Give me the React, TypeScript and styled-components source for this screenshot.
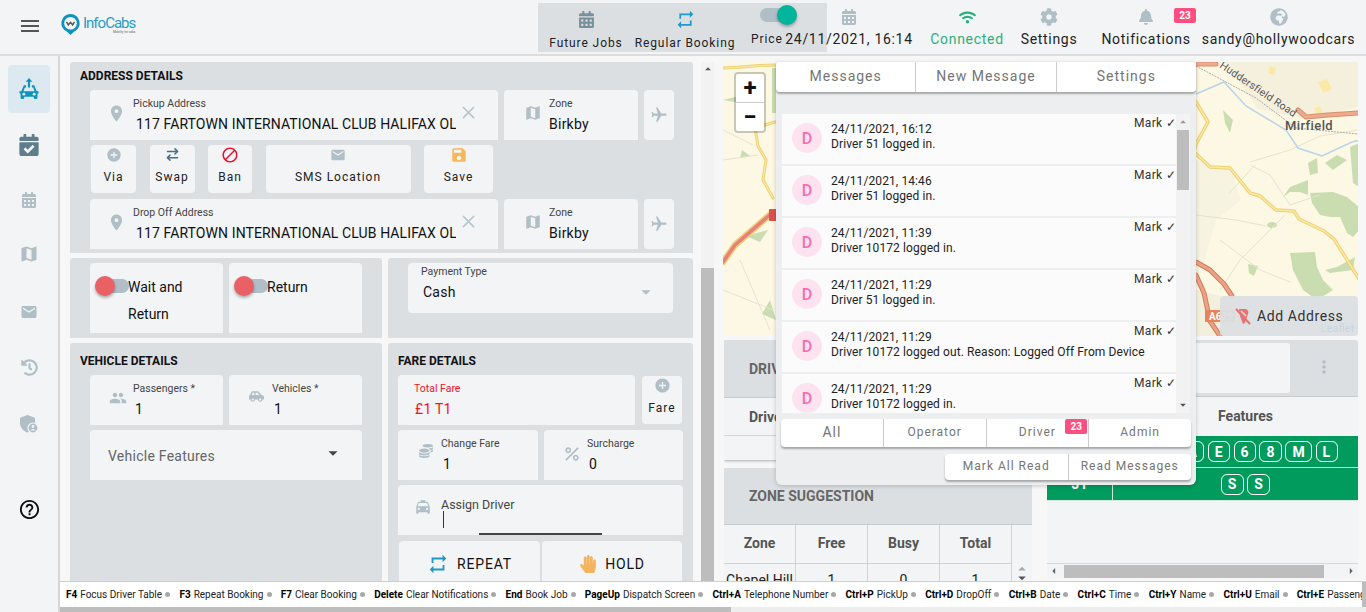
import styled, { createGlobalStyle } from "styled-components";
import { ReactNode } from "react";
import { ArrowRightLeft } from "lucide-react";
import {
  MdAddCircle,
  MdArrowDropDown,
  MdArrowDropUp,
  MdBlock,
  MdClose,
  MdEmail,
  MdFlight,
  MdHelpOutline,
  MdLocalTaxi,
  MdMap,
  MdMenu,
  MdMoreVert,
  MdPeople,
  MdPercent,
  MdPlace,
  MdRepeat,
  MdSave,
  MdArrowLeft,
  MdArrowRight,
} from "react-icons/md";
import {
  FaBell,
  FaCalendarAlt,
  FaCalendarCheck,
  FaCarSide,
  FaCog,
  FaCoins,
  FaGlobeAfrica,
  FaHandPaper,
  FaHistory,
  FaWifi,
} from "react-icons/fa";

const Global = createGlobalStyle`
  html, body { margin: 0; padding: 0; height: 100%; overflow: hidden; }
  body { font-family: Roboto, "Liberation Sans", sans-serif; color: #111; background: #f7f7f7; }
  * { box-sizing: border-box; }
`;

const Page = styled.div`
  width: 1366px;
  height: 612px;
  display: flex;
  flex-direction: column;
  overflow: hidden;
`;

/* ---------- header ---------- */
const Header = styled.header`
  height: 56px;
  flex: none;
  display: flex;
  background: #f2f4f6;
  border-bottom: 2px solid #dcdcdc;
`;
const Burger = styled.div`
  width: 60px;
  display: flex;
  justify-content: center;
  align-items: center;
  color: #555;
  padding-bottom: 2px;
`;
const Logo = styled.div`
  width: 478px;
  display: flex;
  align-items: center;
  gap: 2px;
  padding-bottom: 5px;
`;
const LogoText = styled.div`
  color: #2b9cc4;
  font-size: 15px;
  line-height: 14px;
  letter-spacing: -1px;
  small {
    display: block;
    font-size: 3px;
    line-height: 4px;
    text-align: right;
    color: #666;
    letter-spacing: 0;
  }
`;
const Quick = styled.div`
  width: 289px;
  height: 49px;
  margin-top: 3px;
  background: #dcdfe2;
  display: flex;
  flex: none;
`;
const QuickItem = styled.div<{ $w: number }>`
  width: ${(p) => p.$w}px;
  flex: none;
  display: flex;
  flex-direction: column;
  align-items: center;
  font-size: 12px;
  letter-spacing: 0.9px;
  white-space: nowrap;
  height: 100%;
  padding-top: 3px;
  color: #222;
`;
const IconBox = styled.div<{ $color?: string }>`
  height: 26px;
  display: flex;
  align-items: center;
  color: ${(p) => p.$color || "#b0bec5"};
`;
const QuickLabel = styled.div`
  margin-top: 4px;
  line-height: 14px;
`;
const PriceItem = styled.div`
  flex: 1;
  padding: 0 0 0 15px;
  font-size: 12px;
  line-height: 14px;
  letter-spacing: 0.9px;
  color: #222;
  white-space: nowrap;
`;
const Toggle = styled.div<{ $on?: boolean; $w: number }>`
  position: relative;
  width: ${(p) => p.$w}px;
  height: 14px;
  flex: none;
  background: #b0bec5;
  border-radius: 7px;
  &::after {
    content: "";
    position: absolute;
    top: -3px;
    width: 20px;
    height: 20px;
    border-radius: 50%;
    ${(p) => (p.$on ? "right: 0;" : "left: -9px;")}
    background: ${(p) => (p.$on ? "#00b59c" : "#e96065")};
    box-shadow: 0 2px 3px rgba(0, 0, 0, 0.3);
  }
`;
const PriceToggle = styled(Toggle)`
  margin: 5px 0 10px 9px;
`;
const Statuses = styled.div`
  margin-left: -43px;
  display: flex;
  position: relative;
`;
const Status = styled.div<{ $w: number; $ml?: number; $color?: string }>`
  width: ${(p) => p.$w}px;
  margin-left: ${(p) => p.$ml ?? 0}px;
  position: relative;
  flex: none;
  display: flex;
  flex-direction: column;
  align-items: center;
  padding-top: 4px;
  font-size: 14px;
  letter-spacing: 0.7px;
  white-space: nowrap;
  color: ${(p) => p.$color || "#222"};
`;
const StatusLabel = styled.div`
  line-height: 18px;
`;
const Badge = styled.span`
  position: absolute;
  background: #ff4f81;
  color: #fff;
  font-size: 10px;
  font-weight: 700;
  letter-spacing: 0;
  width: 22px;
  height: 15px;
  line-height: 15px;
  text-align: center;
  border-radius: 2px;
`;
const BellBadge = styled(Badge)`
  top: 8px;
  left: 73px;
`;

/* ---------- body ---------- */
const Body = styled.div`
  flex: 1;
  min-height: 0;
  display: flex;
`;
const Sidebar = styled.nav`
  width: 60px;
  flex: none;
  background: #f2f4f6;
  border-right: 2px solid #d6d6d6;
  padding: 9px 0 0 8px;
  display: flex;
  flex-direction: column;
  align-items: flex-start;
`;
const SideItem = styled.div<{ $active?: boolean; $h: number; $color?: string }>`
  width: 42px;
  height: ${(p) => p.$h}px;
  flex: none;
  display: flex;
  justify-content: center;
  align-items: center;
  border-radius: 4px;
  background: ${(p) => (p.$active ? "#dce9f0" : "transparent")};
  color: ${(p) => p.$color || "#b0bec5"};
`;
const Main = styled.div`
  flex: 1;
  min-width: 0;
  display: flex;
  flex-direction: column;
`;
const Work = styled.div`
  flex: 1;
  min-height: 0;
  display: flex;
  overflow: hidden;
  padding-top: 6px;
`;
const Booking = styled.div`
  width: 623px;
  flex: none;
  margin-left: 10px;
  display: grid;
  grid-template-columns: 312px 305px;
  grid-template-rows: 191px 80px 238px;
  column-gap: 6px;
  row-gap: 5px;
  overflow: hidden;
`;
const Section = styled.section<{ $span?: boolean }>`
  background: #dcdfe2;
  padding: 0 10px;
  overflow: hidden;
  border-radius: 3px 3px 0 0;
  grid-column: ${(p) => (p.$span ? "1 / 3" : "auto")};
`;
const Title = styled.h3<{ $top?: number }>`
  margin: ${(p) => p.$top ?? 0}px 0 0;
  height: 28px;
  line-height: 28px;
  font-size: 12px;
  font-weight: 700;
  color: #111;
`;
const Row = styled.div<{ $left?: number; $gap?: number; $top?: number }>`
  display: flex;
  margin-left: ${(p) => p.$left ?? 10}px;
  margin-top: ${(p) => p.$top ?? 0}px;
  gap: ${(p) => p.$gap ?? 6}px;
`;
const Card = styled.div<{ $w: number }>`
  position: relative;
  width: ${(p) => p.$w}px;
  height: 50px;
  flex: none;
  background: #f2f4f6;
  border-radius: 4px 4px 0 0;
  display: flex;
  overflow: hidden;
`;
const Slot = styled.div<{ $w: number; $dx?: number; $top?: number }>`
  width: ${(p) => p.$w}px;
  flex: none;
  display: flex;
  justify-content: center;
  align-items: flex-start;
  padding: ${(p) => p.$top ?? 14}px 0 0 ${(p) => p.$dx ?? 12}px;
  color: #b0bec5;
`;
const Stack = styled.div<{ $w?: number; $top?: number }>`
  width: ${(p) => (p.$w ? `${p.$w}px` : "auto")};
  flex: ${(p) => (p.$w ? "none" : "1")};
  padding-top: ${(p) => p.$top ?? 7}px;
  overflow: hidden;
`;
const Label = styled.div<{ $color?: string }>`
  font-size: 10.5px;
  line-height: 13px;
  color: ${(p) => p.$color || "#444"};
  white-space: nowrap;
`;
const Value = styled.div<{ $color?: string; $indent?: number; $ls?: number }>`
  margin-top: 5px;
  padding-left: ${(p) => p.$indent ?? 2}px;
  font-size: 14px;
  line-height: 18px;
  letter-spacing: ${(p) => p.$ls ?? 0.25}px;
  white-space: nowrap;
  color: ${(p) => p.$color || "#111"};
`;
const ClearBtn = styled.div`
  width: 24px;
  flex: none;
  display: flex;
  justify-content: center;
  padding-top: 12px;
  color: #b8c7ce;
`;
const PlaneBtn = styled.div`
  width: 30px;
  height: 50px;
  flex: none;
  background: #f2f4f6;
  border-radius: 4px;
  display: flex;
  align-items: center;
  justify-content: center;
  color: #b0bec5;
`;
const ActionBtn = styled.div<{ $w: number; $mt?: number }>`
  width: ${(p) => p.$w}px;
  height: 48px;
  margin-top: ${(p) => p.$mt ?? 0}px;
  flex: none;
  background: #f2f4f6;
  border-radius: 4px;
  display: flex;
  flex-direction: column;
  align-items: center;
  font-size: 12px;
  letter-spacing: 1px;
  color: #222;
`;
const ActionIcon = styled.div<{ $color?: string }>`
  height: 19px;
  display: flex;
  align-items: center;
  color: ${(p) => p.$color || "#b0bec5"};
`;
const ActionText = styled.div`
  margin-top: 6px;
  line-height: 14px;
`;
const ToggleCard = styled.div`
  width: 133px;
  height: 70px;
  flex: none;
  background: #f2f4f6;
  display: flex;
  align-items: flex-start;
  padding: 11px 0 0 14px;
  border-radius: 4px 4px 0 0;
`;
const ToggleText = styled.div`
  font-size: 14px;
  line-height: 27px;
  margin-left: -1px;
  position: relative;
`;
const CardToggle = styled(Toggle)`
  margin-top: 5px;
`;
const PayCard = styled(Card)`
  border-radius: 4px;
  padding-left: 13px;
`;
const Caret = styled.div`
  display: flex;
  padding-top: 18px;
  color: #b0bec5;
`;
const Features = styled(Card)`
  padding: 1px 0 0 18px;
  align-items: center;
  justify-content: space-between;
  font-size: 14px;
  letter-spacing: 0.25px;
  color: #666;
`;
const FeatureCaret = styled.div`
  display: flex;
  color: #444;
  margin: -6px 18px 0 0;
`;
const AssignLabel = styled.div`
  font-size: 12.5px;
  line-height: 16px;
  color: #444;
`;
const Cursor = styled.div`
  width: 1px;
  height: 17px;
  background: #333;
  margin: -2px 0 0 2px;
`;
const Underline = styled.div`
  position: absolute;
  left: 81px;
  bottom: 0;
  width: 123px;
  height: 2px;
  background: #444;
`;
const BigBtn = styled.div<{ $w: number }>`
  width: ${(p) => p.$w}px;
  height: 46px;
  flex: none;
  background: #f2f4f6;
  border-radius: 4px 4px 0 0;
  display: flex;
  align-items: center;
  justify-content: center;
  gap: 8px;
  font-size: 14px;
  letter-spacing: 0.8px;
  color: #111;
`;
const VBar = styled.div`
  width: 13px;
  flex: none;
  margin-left: 8px;
  background: #f2f2f2;
  display: flex;
  flex-direction: column;
  align-items: center;
  color: #555;
  height: 100%;
`;
const VThumb = styled.div`
  width: 100%;
  flex: 1;
  margin-top: 194px;
  background: #bdbdbd;
`;
const UpHead = styled.div`
  height: 12px;
  display: flex;
  justify-content: center;
`;

/* ---------- right side ---------- */
const Right = styled.div`
  position: relative;
  width: 635px;
  flex: none;
  margin-left: 9px;
  display: flex;
  flex-direction: column;
`;
const MapBox = styled.div`
  position: relative;
  height: 274px;
  flex: none;
  background: #fdf8e4;
  overflow: hidden;
`;
const MapSvg = styled.svg`
  display: block;
`;
const Zoom = styled.div`
  position: absolute;
  left: 11px;
  top: 10px;
  width: 32px;
  height: 61px;
  border: 2px solid rgba(0, 0, 0, 0.2);
  border-radius: 4px;
  background: #fff;
  display: flex;
  flex-direction: column;
  background-clip: padding-box;
`;
const ZoomBtn = styled.div`
  flex: 1;
  display: flex;
  align-items: center;
  justify-content: center;
  font-size: 24px;
  font-weight: 700;
  color: #111;
  & + & {
    border-top: 1px solid #ccc;
  }
`;
const AddAddress = styled.div`
  position: absolute;
  right: 0;
  bottom: 0;
  width: 138px;
  height: 40px;
  background: rgba(220, 223, 226, 0.94);
  border-radius: 4px;
  display: flex;
  align-items: center;
  padding-left: 15px;
  gap: 5px;
  font-size: 14px;
  letter-spacing: 0.6px;
  color: #333;
`;
const Leaflet = styled.span`
  position: absolute;
  right: 4px;
  bottom: 1px;
  font-size: 11px;
  color: #c6d6e0;
  letter-spacing: 0;
`;
const Lower = styled.div`
  flex: 1;
  min-height: 0;
  display: grid;
  grid-template-columns: 308px 311px;
  column-gap: 15px;
  padding: 4px 0 0 1px;
`;
const LeftTables = styled.div`
  display: flex;
  flex-direction: column;
  gap: 7px;
  overflow: hidden;
`;
const Panel = styled.div`
  background: #f2f4f6;
  border-radius: 3px 3px 0 0;
  flex: none;
`;
const DriverPanel = styled(Panel)`
  height: 120px;
  box-shadow: 0 1px 3px rgba(0, 0, 0, 0.3);
  margin-bottom: 1px;
`;
const PanelHead = styled.div<{ $h: number }>`
  height: ${(p) => p.$h}px;
  background: #dcdfe2;
  border-bottom: 1px solid #c9cccf;
  display: flex;
  align-items: center;
  padding-left: 25px;
  font-size: 14px;
  font-weight: 700;
  color: #666;
`;
const DriverCol = styled.div`
  height: 38px;
  display: flex;
  align-items: center;
  padding-left: 25px;
  font-size: 14px;
  font-weight: 700;
  color: #555;
  border-bottom: 1px solid #d6d6d6;
`;
const ZoneGrid = styled.div`
  display: grid;
  grid-template-columns: 72px 72px 72px 72px 19px;
  height: 57px;
`;
const ZoneHead = styled.div`
  height: 39px;
  display: flex;
  align-items: center;
  justify-content: center;
  padding-bottom: 2px;
  font-size: 14px;
  font-weight: 700;
  color: #555;
  border-right: 1px solid #d0d3d6;
  border-bottom: 1px solid #d0d3d6;
`;
const ZoneCell = styled.div`
  height: 18px;
  padding-top: 8px;
  text-align: center;
  font-size: 14px;
  line-height: 16px;
  white-space: nowrap;
  color: #222;
  border-right: 1px solid #d0d3d6;
`;
const ZoneScroll = styled.div`
  grid-column: 5;
  grid-row: 1 / 3;
  display: flex;
  flex-direction: column;
  align-items: center;
  justify-content: flex-end;
  color: #999;
  line-height: 0;
`;
const ScrollArrow = styled.div<{ $color?: string; $h?: number }>`
  height: ${(p) => p.$h ?? 9}px;
  display: flex;
  justify-content: center;
  align-items: center;
  color: ${(p) => p.$color || "#555"};
`;
const RightTable = styled(Panel)`
  display: flex;
  flex-direction: column;
  height: 238px;
  overflow: hidden;
`;
const TableTop = styled.div`
  height: 57px;
  flex: none;
  background: #dcdfe2;
  border-bottom: 1px solid #c9cccf;
  padding-top: 3px;
  display: flex;
`;
const TopCard = styled.div`
  width: 243px;
  height: 50px;
  background: #f2f4f6;
  border-radius: 3px;
`;
const Kebab = styled.div`
  flex: 1;
  display: flex;
  align-items: center;
  justify-content: center;
  color: #b0bec5;
  padding-bottom: 6px;
`;
const FeatHead = styled.div`
  height: 39px;
  flex: none;
  display: grid;
  grid-template-columns: 66px 1fr;
  align-items: center;
  text-align: center;
  padding-bottom: 2px;
  font-size: 14px;
  font-weight: 700;
  color: #555;
  span + span {
    padding-left: 20px;
  }
`;
const GreenRow = styled.div<{ $h: number }>`
  height: ${(p) => p.$h}px;
  flex: none;
  display: grid;
  grid-template-columns: 66px 1fr;
  background: #019b5e;
  color: #fff;
  border-bottom: 1px solid #d5e8df;
`;
const GreenId = styled.div`
  display: flex;
  align-items: center;
  justify-content: center;
  font-size: 14px;
  font-weight: 700;
  border-right: 1px solid #cfe8dc;
`;
const Chips = styled.div`
  display: flex;
  align-items: center;
  justify-content: center;
  gap: 3.5px;
  padding-left: 20px;
`;
const Chip = styled.span`
  min-width: 20px;
  height: 21px;
  padding: 0 6px;
  border: 1px solid #fff;
  border-radius: 6px;
  display: flex;
  align-items: center;
  justify-content: center;
  font-size: 14px;
  font-weight: 700;
  letter-spacing: 0.4px;
`;
const TableFill = styled.div`
  flex: 1;
`;
const HBar = styled.div`
  height: 15px;
  flex: none;
  border-top: 1px solid #d8d8d8;
  display: flex;
  align-items: center;
  color: #666;
`;
const HThumb = styled.div`
  width: 260px;
  height: 13px;
  margin: 0 auto 0 3px;
  background: #bdbdbd;
`;

/* ---------- messages popover ---------- */
const Popover = styled.div`
  position: absolute;
  left: 53px;
  top: 0;
  width: 420px;
  height: 423px;
  background: #eceef0;
  border-radius: 0 0 6px 6px;
  box-shadow: 0 1px 4px rgba(0, 0, 0, 0.2);
  display: flex;
  flex-direction: column;
`;
const TabBar = styled.div<{ $h: number }>`
  height: ${(p) => p.$h}px;
  flex: none;
  display: flex;
  background: #fff;
  border-radius: 4px;
  box-shadow: 0 2px 2px rgba(0, 0, 0, 0.3);
`;
const Tab = styled.div<{ $size?: number }>`
  position: relative;
  flex: 1;
  display: flex;
  align-items: center;
  justify-content: center;
  padding-bottom: 2px;
  font-size: ${(p) => p.$size ?? 14}px;
  letter-spacing: 1px;
  color: #757575;
  white-space: nowrap;
  & + & {
    border-left: 1px solid #ccc;
  }
`;
const MsgWrap = styled.div`
  margin: 22px 6px 6px;
  height: 299px;
  flex: none;
  display: flex;
  overflow: hidden;
`;
const MsgList = styled.div`
  width: 394px;
  flex: none;
  display: flex;
  flex-direction: column;
  gap: 2px;
`;
const Msg = styled.div`
  position: relative;
  height: 50px;
  flex: none;
  background: #fbfbfb;
  display: flex;
  padding: 9px 0 0 10px;
`;
const Avatar = styled.div`
  width: 30px;
  height: 30px;
  flex: none;
  border-radius: 50%;
  background: #fde3f0;
  color: #ff69b4;
  display: flex;
  align-items: center;
  justify-content: center;
  font-size: 16px;
  font-weight: 500;
  margin-right: 9px;
`;
const MsgText = styled.div`
  margin-top: -1px;
  font-size: 12px;
  line-height: 15px;
  letter-spacing: 0.1px;
  color: #222;
`;
const Mark = styled.div`
  position: absolute;
  right: 0;
  top: 2px;
  font-size: 12px;
  line-height: 14px;
  letter-spacing: 0.3px;
  color: #333;
`;
const MsgScroll = styled.div`
  width: 14px;
  flex: none;
  background: #f2f2f2;
  display: flex;
  flex-direction: column;
  color: #777;
`;
const MsgThumb = styled.div`
  height: 60px;
  margin: 0 1px;
  background: #bdbdbd;
`;
const MsgGrow = styled.div`
  flex: 1;
`;
const FilterBar = styled(TabBar)`
  margin: 0 5px;
`;
const ReadBar = styled(TabBar)`
  width: 246px;
  margin: 7px 5px 0 auto;
`;
const TabBadge = styled(Badge)`
  top: 0;
  right: 1px;
`;

/* ---------- footer ---------- */
const Shortcuts = styled.div`
  height: 31px;
  flex: none;
  background: #fff;
  border-top: 1px solid #cfcfcf;
  position: relative;
  overflow: hidden;
`;
const ShortcutRow = styled.div`
  height: 25px;
  display: flex;
  align-items: center;
  padding-left: 6px;
  gap: 9.3px;
  white-space: nowrap;
  font-size: 10px;
  color: #222;
`;
const Shortcut = styled.span`
  display: flex;
  align-items: center;
  b {
    font-weight: 700;
    color: #000;
    margin-right: 3px;
  }
`;
const Dot = styled.i`
  width: 5px;
  height: 5px;
  border-radius: 50%;
  background: #a8a8a8;
  margin-left: 3px;
`;
const EdgeThumb = styled.div`
  position: absolute;
  top: 0;
  right: 0;
  width: 4px;
  height: 25px;
  background: #bdbdbd;
`;
const FootScroll = styled.div`
  height: 5px;
  background: #ededed;
`;
const FootThumb = styled.div`
  width: 671px;
  height: 5px;
  background: #bdbdbd;
`;

const shortcuts: [string, string][] = [
  ["F4", "Focus Driver Table"],
  ["F3", "Repeat Booking"],
  ["F7", "Clear Booking"],
  ["Delete", "Clear Notifications"],
  ["End", "Book Job"],
  ["PageUp", "Dispatch Screen"],
  ["Ctrl+A", "Telephone Number"],
  ["Ctrl+P", "PickUp"],
  ["Ctrl+D", "DropOff"],
  ["Ctrl+B", "Date"],
  ["Ctrl+C", "Time"],
  ["Ctrl+Y", "Name"],
  ["Ctrl+U", "Email"],
  ["Ctrl+E", "Passenger"],
];

const messages = [
  ["24/11/2021, 16:12", "Driver 51 logged in."],
  ["24/11/2021, 14:46", "Driver 51 logged in."],
  ["24/11/2021, 11:39", "Driver 10172 logged in."],
  ["24/11/2021, 11:29", "Driver 51 logged in."],
  ["24/11/2021, 11:29", "Driver 10172 logged out. Reason: Logged Off From Device"],
  ["24/11/2021, 11:29", "Driver 10172 logged in."],
];

const ADDRESS = "117 FARTOWN INTERNATIONAL CLUB HALIFAX OL1 3PF";

function LogoMark() {
  return (
    <svg width="21" height="23" viewBox="0 0 24 26">
      <path
        d="M12 1a10.500 10.500 0 0 0-4 20.200L12 25l4-3.800A10.500 10.500 0 0 0 12 1z"
        fill="#0f93bd"
      />
      <circle cx="12" cy="11.500" r="7.200" fill="#f2f4f6" />
      <path d="M7.500 10l2 3.500 2.500-3 2.500 3 2-3.500" fill="none" stroke="#555" strokeWidth="1.600" />
    </svg>
  );
}

function CarUp() {
  return (
    <svg width="22" height="24" viewBox="0 0 30 32" fill="#0f93bd">
      <path d="M15 1l-4.500 5H13.500v8h3V6h3z" />
      <path d="M8 11h3v3H9.200l-1.600 5h14.800l-1.600-5H19v-3h3.200l3.300 8H28v3h-1.500v6a1.500 1.500 0 0 1-1.500 1.500h-2a1.500 1.500 0 0 1-1.500-1.500v-1.500h-13V28A1.500 1.500 0 0 1 7 29.500H5A1.500 1.500 0 0 1 3.500 28v-6H2v-3h2.500z" />
      <circle cx="8" cy="23" r="2" fill="#dce9f0" />
      <circle cx="22" cy="23" r="2" fill="#dce9f0" />
    </svg>
  );
}

function ShieldUser() {
  return (
    <svg width="20" height="20" viewBox="0 0 20 20">
      <path d="M8.500 1L1 3.800v5c0 4.500 3.200 8.500 7.500 9.700 1-.3 2-.8 2.800-1.400V9H16V3.800z" fill="#b0bec5" />
      <circle cx="14" cy="14" r="5" fill="#b0bec5" stroke="#f2f4f6" strokeWidth="1.200" />
      <circle cx="14" cy="12.500" r="1.400" fill="#f2f4f6" />
      <path d="M11.500 16.500a2.600 2.200 0 0 1 5 0z" fill="#f2f4f6" />
    </svg>
  );
}

function PinOff() {
  return (
    <svg width="17" height="17" viewBox="0 0 17 17" fill="#e57373">
      <path d="M4 1h7a4 4 0 0 1 2 5l-3 9-2 1-3-8z" />
      <path d="M1 1l14 15" stroke="#e57373" strokeWidth="2.200" />
      <path d="M6 3l5 5" stroke="#dcdfe2" strokeWidth="1.500" />
    </svg>
  );
}

const YELLOW_EAST = "M1196 102l12 20-12 22-2 8 16 15 20 1 20 25 10 3 16 14 18 1 5 8 25 12 10 8 25 40";
const YELLOW_WEST = "M723 68c20 0 30-3 53-3M755 128l20-6M755 128l3 18 8 14-3 20 10 18";
const MAIN_ROADS = "M1196 64l20 0M1298 110l8 7 22-2 30-2";
const SOUTH_ROADS = "M1196 262l14 8 14 14 8 12M1196 275l8 18 6 28 10 15";
const WEST_TRUNK = "M723 262l12-17 37-32";

function MapArt() {
  return (
    <MapSvg width="635" height="274" viewBox="723 62 635 274">
      <rect x="723" y="62" width="635" height="274" fill="#fdf8e4" />
      {/* built up areas */}
      <path d="M1225 62h133v45l-50 12-50-10-33-47z" fill="#f4f0dc" />
      <path d="M1196 160l35 10 10 30-25 20-20 70h-10v-130z" fill="#f6f3e1" />
      <path d="M1196 290l40 10 10 36h-50z" fill="#f3efdd" />
      <path d="M1270 66l6 2-2 7-6-2zM1318 82l9-3 5 10-9 4zM1314 108l6-2 3 6-6 2z" fill="#fbe9a8" />
      {/* woodland */}
      <g fill="#c9ddb1">
        <path d="M1310 193l23-1 14 5 12 10v23l-6 7-6-4-7-16-10 0-10-2-8-12z" />
        <path d="M1283 197l7-10 18-7v15l-8-3-10 0z" />
        <path d="M1308 163l9-5 1 15-8 2z" />
        <path d="M1325 163l12-8 10 5-14 10z" />
        <path d="M1350 147l9-4v44l-6-4z" />
        <path d="M1290 253l25-1 2 15 6 13 10 10-16 10-14-10-10-20z" />
        <path d="M1325 270l12-3 18-10-2 13-23 3z" />
        <ellipse cx="1272" cy="225" rx="5" ry="3" />
        <path d="M1223 110l10 10-3 13-5-10z" />
        <path d="M1248 264l10 2-4 10-5-3z" />
        <path d="M723 100l25-6 8 5-10 5zM742 150l8 6-10 2zM768 230l-8 12-14-6zM770 300l6 20-14-6z" />
        <path d="M772 68h4v45h-4z" />
      </g>
      {/* minor roads */}
      <g fill="none" stroke="#e6e2cc" strokeWidth="1">
        <path d="M1250 162l40-12 30-14 38-6M1255 165l-20 22-6 6M1285 215l-20 20-25 25-20 30M1220 240l40 30 30 12M1196 215l40 5 30 6M1320 195l-30 10-20-30-20-10" />
        <path d="M723 130l30 15M723 160l35-5M723 290l50 20M740 260l30 70" />
      </g>
      {/* rail and river */}
      <path d="M1196 66l60 32 40 30 62 6" fill="none" stroke="#aaa" strokeWidth="1" strokeDasharray="2 1" />
      <path d="M1196 94l28-12 22 24 40 24 12 18 24 8 30-14 26-6" fill="none" stroke="#b8d4ea" strokeWidth="1.500" />
      {/* roads, casing first */}
      <g fill="none" strokeLinecap="round" strokeLinejoin="round">
        <path d={YELLOW_EAST} stroke="#eccf74" strokeWidth="3.500" />
        <path d={YELLOW_EAST} stroke="#fbe9a0" strokeWidth="1.500" />
        <path d={YELLOW_WEST} stroke="#eccf74" strokeWidth="3" />
        <path d={YELLOW_WEST} stroke="#fbe9a0" strokeWidth="1.200" />
        <path d={WEST_TRUNK} stroke="#eccf74" strokeWidth="6.500" />
        <path d={WEST_TRUNK} stroke="#e77f7a" strokeWidth="3.500" />
        <path d={MAIN_ROADS} stroke="#d98e6c" strokeWidth="5" />
        <path d={MAIN_ROADS} stroke="#eeaa8c" strokeWidth="3" />
        <path d={SOUTH_ROADS} stroke="#cf7f60" strokeWidth="5" />
        <path d={SOUTH_ROADS} stroke="#eea184" strokeWidth="3" />
      </g>
      <rect x="769" y="209" width="8" height="12" rx="1" fill="#d9534f" />
      <text x="1219" y="67" fontFamily="Roboto, sans-serif" fontSize="10.500" fill="#555" transform="rotate(34 1219 67)" letterSpacing="0.2">
        Huddersfield Road
      </text>
      <text x="1285" y="130" fontFamily="Roboto, sans-serif" fontSize="13" fontWeight="500" fill="#555" letterSpacing="0.4">
        Mirfield
      </text>
      <rect x="1205" y="310" width="30" height="12" rx="1" fill="#e8825a" />
      <text x="1209" y="320" fontFamily="Roboto, sans-serif" fontSize="10" fontWeight="700" fill="#fff">
        A629
      </text>
    </MapSvg>
  );
}

function Field(props: {
  w: number;
  slot: number;
  icon?: ReactNode;
  label: string;
  value: string;
  color?: string;
  indent?: number;
}) {
  return (
    <Card $w={props.w}>
      <Slot $w={props.slot}>{props.icon}</Slot>
      <Stack>
        <Label $color={props.color}>{props.label}</Label>
        <Value $color={props.color} $indent={props.indent}>
          {props.value}
        </Value>
      </Stack>
    </Card>
  );
}

function AddressRow({ label, top }: { label: string; top?: number }) {
  return (
    <Row $top={top}>
      <Card $w={408}>
        <Slot $w={43} $dx={9}>
          <MdPlace size={19} />
        </Slot>
        <Stack $w={323}>
          <Label>{label}</Label>
          <Value $indent={3} $ls={0.1}>
            {ADDRESS}
          </Value>
        </Stack>
        <ClearBtn>
          <MdClose size={21} />
        </ClearBtn>
      </Card>
      <Field w={134} slot={45} icon={<MdMap size={18} />} label="Zone" value="Birkby" indent={0} />
      <PlaneBtn>
        <MdFlight size={18} style={{ transform: "rotate(90deg)" }} />
      </PlaneBtn>
    </Row>
  );
}

function App() {
  return (
    <Page>
      <Global />
      <Header>
        <Burger>
          <MdMenu size={24} />
        </Burger>
        <Logo>
          <LogoMark />
          <LogoText>
            InfoCabs
            <small>Mobility for cabs</small>
          </LogoText>
        </Logo>
        <Quick>
          <QuickItem $w={96}>
            <IconBox $color="#78909c">
              <FaCalendarAlt size={17} />
            </IconBox>
            <QuickLabel>Future Jobs</QuickLabel>
          </QuickItem>
          <QuickItem $w={102}>
            <IconBox $color="#1d9ac6">
              <MdRepeat size={21} />
            </IconBox>
            <QuickLabel>Regular Booking</QuickLabel>
          </QuickItem>
          <PriceItem>
            <PriceToggle $on $w={37} />
            Price
          </PriceItem>
        </Quick>
        <Statuses>
          <Status $w={130}>
            <IconBox>
              <FaCalendarAlt size={16} />
            </IconBox>
            <StatusLabel>24/11/2021, 16:14</StatusLabel>
          </Status>
          <Status $w={74} $ml={16} $color="#2fae80">
            <IconBox $color="#2fae80">
              <FaWifi size={17} />
            </IconBox>
            <StatusLabel>Connected</StatusLabel>
          </Status>
          <Status $w={58} $ml={16}>
            <IconBox>
              <FaCog size={18} />
            </IconBox>
            <StatusLabel>Settings</StatusLabel>
          </Status>
          <Status $w={90} $ml={23}>
            <IconBox>
              <FaBell size={16} />
            </IconBox>
            <StatusLabel>Notifications</StatusLabel>
            <BellBadge>23</BellBadge>
          </Status>
          <Status $w={155} $ml={10}>
            <IconBox>
              <FaGlobeAfrica size={18} />
            </IconBox>
            <StatusLabel>sandy@hollywoodcars</StatusLabel>
          </Status>
        </Statuses>
      </Header>
      <Body>
        <Sidebar>
          <SideItem $active $h={48}>
            <CarUp />
          </SideItem>
          <SideItem $h={64} $color="#607d8b">
            <FaCalendarCheck size={22} />
          </SideItem>
          <SideItem $h={46}>
            <FaCalendarAlt size={16} />
          </SideItem>
          <SideItem $h={62}>
            <MdMap size={20} />
          </SideItem>
          <SideItem $h={54}>
            <MdEmail size={18} />
          </SideItem>
          <SideItem $h={56}>
            <FaHistory size={17} />
          </SideItem>
          <SideItem $h={58}>
            <ShieldUser />
          </SideItem>
          <SideItem $h={112} $color="#111">
            <MdHelpOutline size={23} />
          </SideItem>
        </Sidebar>
        <Main>
          <Work>
            <Booking>
              <Section $span>
                <Title>ADDRESS DETAILS</Title>
                <AddressRow label="Pickup Address" />
                <Row $left={11} $gap={13.5} $top={5}>
                  <ActionBtn $w={45}>
                    <ActionIcon>
                      <MdAddCircle size={16} />
                    </ActionIcon>
                    <ActionText>Via</ActionText>
                  </ActionBtn>
                  <ActionBtn $w={45}>
                    <ActionIcon $color="#4a6f8a">
                      <ArrowRightLeft size={15} strokeWidth={2.4} />
                    </ActionIcon>
                    <ActionText>Swap</ActionText>
                  </ActionBtn>
                  <ActionBtn $w={44}>
                    <ActionIcon $color="#e8112d">
                      <MdBlock size={18} />
                    </ActionIcon>
                    <ActionText>Ban</ActionText>
                  </ActionBtn>
                  <ActionBtn $w={145}>
                    <ActionIcon>
                      <MdEmail size={16} />
                    </ActionIcon>
                    <ActionText>SMS Location</ActionText>
                  </ActionBtn>
                  <ActionBtn $w={69}>
                    <ActionIcon $color="#f8b758">
                      <MdSave size={18} />
                    </ActionIcon>
                    <ActionText>Save</ActionText>
                  </ActionBtn>
                </Row>
                <AddressRow label="Drop Off Address" top={6} />
              </Section>

              <Section>
                <Row $top={5}>
                  <ToggleCard>
                    <CardToggle $w={25} />
                    <ToggleText>
                      Wait and
                      <br />
                      Return
                    </ToggleText>
                  </ToggleCard>
                  <ToggleCard>
                    <CardToggle $w={25} />
                    <ToggleText>Return</ToggleText>
                  </ToggleCard>
                </Row>
              </Section>
              <Section>
                <Row $top={5}>
                  <PayCard $w={265}>
                    <Stack $w={214} $top={2}>
                      <Label>Payment Type</Label>
                      <Value>Cash</Value>
                    </Stack>
                    <Caret>
                      <MdArrowDropDown size={22} />
                    </Caret>
                  </PayCard>
                </Row>
              </Section>

              <Section>
                <Title $top={4}>VEHICLE DETAILS</Title>
                <Row>
                  <Field w={133} slot={43} icon={<MdPeople size={18} />} label="Passengers *" value="1" />
                  <Field w={133} slot={43} icon={<FaCarSide size={15} />} label="Vehicles *" value="1" />
                </Row>
                <Row $top={5}>
                  <Features $w={272}>
                    Vehicle Features
                    <FeatureCaret>
                      <MdArrowDropDown size={22} />
                    </FeatureCaret>
                  </Features>
                </Row>
              </Section>
              <Section>
                <Title $top={4}>FARE DETAILS</Title>
                <Row $left={0} $gap={7}>
                  <Field w={237} slot={16} label="Total Fare" value="£1 T1" color="#f0151f" indent={1} />
                  <ActionBtn $w={40} $mt={1}>
                    <ActionIcon>
                      <MdAddCircle size={17} />
                    </ActionIcon>
                    <ActionText>Fare</ActionText>
                  </ActionBtn>
                </Row>
                <Row $left={0} $top={5}>
                  <Field w={140} slot={43} icon={<FaCoins size={14} />} label="Change Fare" value="1" />
                  <Field w={139} slot={43} icon={<MdPercent size={20} />} label="Surcharge" value="0" />
                </Row>
                <Row $left={0} $top={5}>
                  <Card $w={285}>
                    <Slot $w={43} $dx={7} $top={13}>
                      <MdLocalTaxi size={18} />
                    </Slot>
                    <Stack $top={12}>
                      <AssignLabel>Assign Driver</AssignLabel>
                      <Cursor />
                    </Stack>
                    <Underline />
                  </Card>
                </Row>
                <Row $left={1} $gap={2} $top={6}>
                  <BigBtn $w={141}>
                    <MdRepeat size={22} color="#1d9ac6" />
                    REPEAT
                  </BigBtn>
                  <BigBtn $w={140}>
                    <FaHandPaper size={18} color="#f4b35e" />
                    HOLD
                  </BigBtn>
                </Row>
              </Section>
            </Booking>
            <VBar>
              <UpHead>
                <MdArrowDropUp size={14} />
              </UpHead>
              <VThumb />
            </VBar>

            <Right>
              <MapBox>
                <MapArt />
                <Zoom>
                  <ZoomBtn>+</ZoomBtn>
                  <ZoomBtn>−</ZoomBtn>
                </Zoom>
                <AddAddress>
                  <PinOff />
                  Add Address
                  <Leaflet>Leaflet</Leaflet>
                </AddAddress>
              </MapBox>
              <Lower>
                <LeftTables>
                  <DriverPanel>
                    <PanelHead $h={58}>DRIVERS</PanelHead>
                    <DriverCol>Driver</DriverCol>
                  </DriverPanel>
                  <Panel>
                    <PanelHead $h={57}>ZONE SUGGESTION</PanelHead>
                    <ZoneGrid>
                      <ZoneHead>Zone</ZoneHead>
                      <ZoneHead>Free</ZoneHead>
                      <ZoneHead>Busy</ZoneHead>
                      <ZoneHead>Total</ZoneHead>
                      <ZoneScroll>
                        <ScrollArrow $color="#aaa">
                          <MdArrowDropUp size={18} />
                        </ScrollArrow>
                        <ScrollArrow>
                          <MdArrowDropDown size={18} />
                        </ScrollArrow>
                      </ZoneScroll>
                      <ZoneCell>Chapel Hill</ZoneCell>
                      <ZoneCell>1</ZoneCell>
                      <ZoneCell>0</ZoneCell>
                      <ZoneCell>1</ZoneCell>
                    </ZoneGrid>
                  </Panel>
                </LeftTables>
                <RightTable>
                  <TableTop>
                    <TopCard />
                    <Kebab>
                      <MdMoreVert size={20} />
                    </Kebab>
                  </TableTop>
                  <FeatHead>
                    <span>Driver</span>
                    <span>Features</span>
                  </FeatHead>
                  <GreenRow $h={32}>
                    <GreenId>51</GreenId>
                    <Chips>
                      {["D", "A", "E", "6", "8", "M", "L"].map((c, i) => (
                        <Chip key={i}>{c}</Chip>
                      ))}
                    </Chips>
                  </GreenRow>
                  <GreenRow $h={33}>
                    <GreenId>J1</GreenId>
                    <Chips>
                      <Chip>S</Chip>
                      <Chip>S</Chip>
                    </Chips>
                  </GreenRow>
                  <TableFill />
                  <HBar>
                    <MdArrowLeft size={14} />
                    <HThumb />
                    <MdArrowRight size={14} />
                  </HBar>
                </RightTable>
              </Lower>
              <Popover>
                <TabBar $h={30}>
                  <Tab>Messages</Tab>
                  <Tab>New Message</Tab>
                  <Tab>Settings</Tab>
                </TabBar>
                <MsgWrap>
                  <MsgList>
                    {messages.map((m, i) => (
                      <Msg key={i}>
                        <Avatar>D</Avatar>
                        <MsgText>
                          {m[0]}
                          <br />
                          {m[1]}
                        </MsgText>
                        <Mark>Mark ✓</Mark>
                      </Msg>
                    ))}
                  </MsgList>
                  <MsgScroll>
                    <ScrollArrow $color="#999" $h={16}>
                      <MdArrowDropUp size={14} />
                    </ScrollArrow>
                    <MsgThumb />
                    <MsgGrow />
                    <ScrollArrow $h={16}>
                      <MdArrowDropDown size={14} />
                    </ScrollArrow>
                  </MsgScroll>
                </MsgWrap>
                <FilterBar $h={28}>
                  <Tab>All</Tab>
                  <Tab $size={12}>Operator</Tab>
                  <Tab $size={12}>
                    Driver
                    <TabBadge>23</TabBadge>
                  </Tab>
                  <Tab $size={12}>Admin</Tab>
                </FilterBar>
                <ReadBar $h={26}>
                  <Tab $size={12}>Mark All Read</Tab>
                  <Tab $size={12}>Read Messages</Tab>
                </ReadBar>
              </Popover>
            </Right>
          </Work>
          <Shortcuts>
            <ShortcutRow>
              {shortcuts.map(([k, t]) => (
                <Shortcut key={k}>
                  <b>{k}</b>
                  {t}
                  <Dot />
                </Shortcut>
              ))}
            </ShortcutRow>
            <EdgeThumb />
            <FootScroll>
              <FootThumb />
            </FootScroll>
          </Shortcuts>
        </Main>
      </Body>
    </Page>
  );
}

export default App;
